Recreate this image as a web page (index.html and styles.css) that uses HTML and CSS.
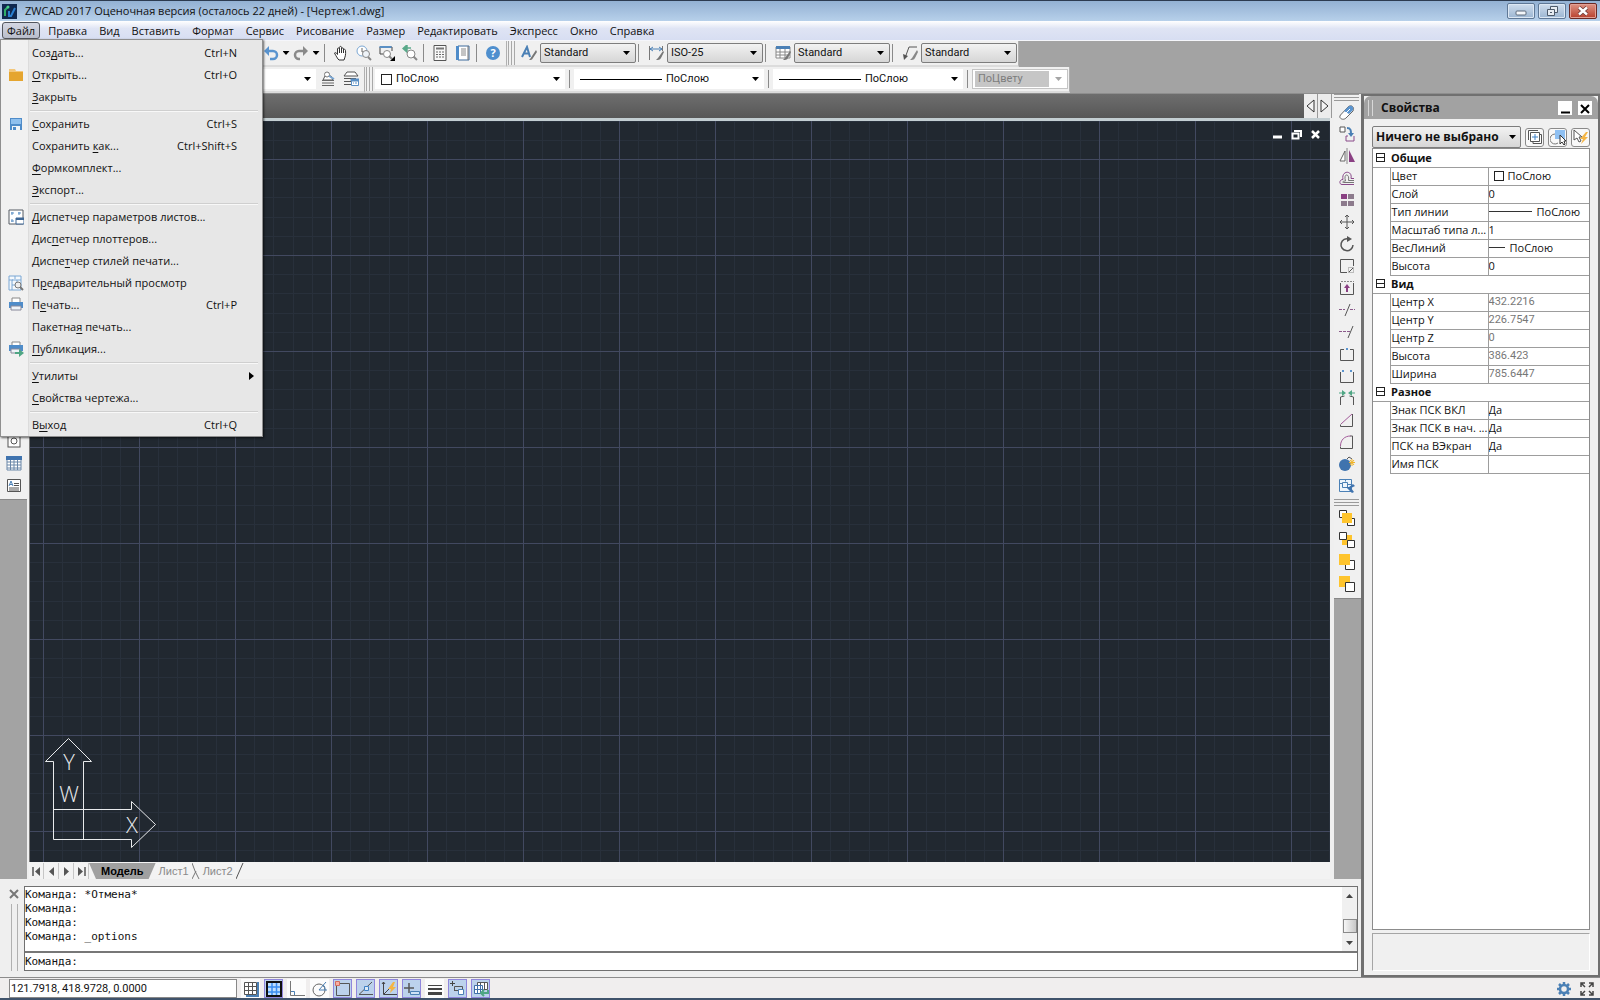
FILE: index.html
```html
<!DOCTYPE html>
<html lang="ru">
<head>
<meta charset="utf-8">
<title>ZWCAD 2017</title>
<link rel="stylesheet" href="styles.css">
</head>
<body>
<div class="app">
  <header class="titlebar">
    <svg class="logo" width="15" height="15" viewBox="0 0 15 15"><rect width="15" height="15" fill="#10284f"/><path d="M3 12V6l3-3" fill="none" stroke="#2fae6a" stroke-width="2"/><path d="M7 7v5l2 0 4-8" fill="none" stroke="#2a7fd0" stroke-width="2"/><circle cx="6" cy="3" r="1.500" fill="#49d08a"/></svg>
    <h1>ZWCAD 2017 Оценочная версия (осталось 22 дней) - [Чертеж1.dwg]</h1>
    <div class="window-buttons">
      <button aria-label="Свернуть"><svg width="12" height="12" viewBox="0 0 12 12"><rect x="1" y="6" width="10" height="4" rx="1" fill="#f4f7fa" stroke="#5d6b7c"/></svg></button>
      <button aria-label="Восстановить"><svg width="12" height="12" viewBox="0 0 12 12"><path d="M4.500 1.500h7v6h-7z" fill="#e6ecf2" stroke="#4d5a6a"/><path d="M1.500 4.500h7v6h-7z" fill="#e6ecf2" stroke="#4d5a6a"/><path d="M4 7h2v1H4z" fill="#4d5a6a"/></svg></button>
      <button class="close" aria-label="Закрыть"><svg width="12" height="12" viewBox="0 0 12 12"><path d="M2 2.500l8 7M10 2.500l-8 7" stroke="#6a3a38" stroke-width="4"/><path d="M2 2.500l8 7M10 2.500l-8 7" stroke="#fff" stroke-width="2.400"/></svg></button>
    </div>
  </header>

  <nav class="menubar">
    <div class="menu-root">
      <button class="menu-title open">Файл</button>
      <div class="menu">
        <button><span>Соз<u>д</u>ать...</span><kbd>Ctrl+N</kbd></button>
        <button><svg width="16" height="16" viewBox="0 0 16 16"><path d="M1 2h6l1 2h7v10H1z" fill="#f3c77b"/><path d="M1 5h14v9H1z" fill="#e5a52f"/></svg><span><u>О</u>ткрыть...</span><kbd>Ctrl+O</kbd></button>
        <button><span><u>З</u>акрыть</span></button>
        <hr>
        <button><svg width="16" height="16" viewBox="0 0 16 16"><path d="M2 2h12v12H2z" fill="#4f8cc9"/><path d="M3 3h10v5H3z" fill="#8fc0ee"/><path d="M4 10h8v4H4z" fill="#f2f5f8"/><path d="M5 11h3v3H5z" fill="#4f8cc9"/></svg><span><u>С</u>охранить</span><kbd>Ctrl+S</kbd></button>
        <button><span>Сохранить <u>к</u>ак...</span><kbd>Ctrl+Shift+S</kbd></button>
        <button><span><u>Ф</u>ормкомплект...</span></button>
        <button><span><u>Э</u>кспорт...</span></button>
        <hr>
        <button><svg width="16" height="16" viewBox="0 0 16 16"><path d="M1 1h14v14H1z" fill="#fff" stroke="#555b63"/><path d="M3 4h3M4 3v3M10 4h3M11 3v3M3 12h3M4 10v3" stroke="#5a8fc4"/><path d="M8 9h8v6H8z" fill="#fff" stroke="#3f6795"/><path d="M8 9h8v2H8z" fill="#3f6795"/></svg><span><u>Д</u>испетчер параметров листов...</span></button>
        <button><span>Дис<u>п</u>етчер плоттеров...</span></button>
        <button><span>Диспе<u>т</u>чер стилей печати...</span></button>
        <button><svg width="16" height="16" viewBox="0 0 16 16"><path d="M1 1h12v14H1zM1 5h4M7 1v3M9 5h4M4 5h5v5H4zM4 10v5" fill="#f5f9fd" stroke="#7aa7d4"/><circle cx="10" cy="10" r="3" fill="#eee" stroke="#777"/><path d="M12 12l3 3" stroke="#777" stroke-width="2"/></svg><span>П<u>р</u>едварительный просмотр</span></button>
        <button><svg width="16" height="16" viewBox="0 0 16 16"><path d="M4 1h8v5H4z" fill="#fff" stroke="#888"/><path d="M1 5h14v6H1z" fill="#4f8cc9"/><path d="M3 9h10v4H3z" fill="#eef3f8" stroke="#889"/></svg><span>П<u>е</u>чать...</span><kbd>Ctrl+P</kbd></button>
        <button><span>Пакетна<u>я</u> печать...</span></button>
        <button><svg width="16" height="16" viewBox="0 0 16 16"><path d="M4 1h8v4H4z" fill="#fff" stroke="#888"/><path d="M1 4h14v6H1z" fill="#4f8cc9"/><path d="M3 8h9v4H3z" fill="#eef3f8" stroke="#889"/><path d="M7 11h4V8l5 4-5 4v-3H7z" fill="#4fa684"/></svg><span><u>П</u>убликация...</span></button>
        <hr>
        <button class="has-sub"><span><u>У</u>тилиты</span></button>
        <button><span><u>С</u>войства чертежа...</span></button>
        <hr>
        <button><span>В<u>ы</u>ход</span><kbd>Ctrl+Q</kbd></button>
      </div>
    </div>
    <button class="menu-title">Правка</button>
    <button class="menu-title">Вид</button>
    <button class="menu-title">Вставить</button>
    <button class="menu-title">Формат</button>
    <button class="menu-title">Сервис</button>
    <button class="menu-title">Рисование</button>
    <button class="menu-title">Размер</button>
    <button class="menu-title">Редактировать</button>
    <button class="menu-title">Экспресс</button>
    <button class="menu-title">Окно</button>
    <button class="menu-title">Справка</button>
  </nav>

  <div class="toolbars">
    <div class="toolrow">
      <div class="toolbar first">
        <button class="tool narrow" aria-label="Отменить"><svg width="16" height="16" viewBox="0 0 16 16"><path d="M3 6h7a4 4 0 010 8H7" fill="none" stroke="#5a94cf" stroke-width="2.500"/><path d="M6 1v10L1 6z" fill="#5a94cf"/></svg></button>
        <button class="drop" aria-label="Список отмены"></button>
        <button class="tool narrow" aria-label="Повторить"><svg width="16" height="16" viewBox="0 0 16 16"><path d="M12 6H6a4 4 0 000 8h1" fill="none" stroke="#8a8a8a" stroke-width="2.500"/><path d="M10 1v10l5-5z" fill="#8a8a8a"/></svg></button>
        <button class="drop" aria-label="Список повтора"></button>
        <i class="sep"></i>
        <button class="tool" aria-label="Панорама"><svg width="16" height="16" viewBox="0 0 16 16"><path d="M5 14C3 11 2 9 1.500 8c1-1 2 0 3 1.500V4c0-1.500 2-1.500 2 0V2.500c0-1.500 2-1.500 2 0V4c0-1.500 2-1.500 2 0v1c0-1 2-1 2 .5C13 10 12 12 11 15H6z" fill="#fff" stroke="#333"/><path d="M6.500 4v4M8.500 3v5M10.500 4v4" stroke="#333"/></svg></button>
        <button class="tool" aria-label="Зуммирование"><svg width="16" height="16" viewBox="0 0 16 16"><circle cx="6" cy="6" r="5" fill="#fff" stroke="#7aa7d4"/><path d="M6 3v4h3" fill="none" stroke="#666"/><circle cx="10" cy="9" r="3.500" fill="#eef3f8" stroke="#888"/><path d="M12 12l3 3" stroke="#888" stroke-width="2"/></svg></button>
        <button class="tool" aria-label="Рамка"><svg width="18" height="16" viewBox="0 0 18 16"><path d="M5 9H2V2h12v4" fill="none" stroke="#444"/><path d="M1.500 2h12" stroke="#5a8fc4" stroke-width="2"/><circle cx="9" cy="9" r="3.500" fill="#fff" stroke="#888"/><path d="M11 11l3 3" stroke="#888" stroke-width="2"/><path d="M17 11v5h-5z" fill="#000"/></svg></button>
        <button class="tool" aria-label="Предыдущий вид"><svg width="16" height="16" viewBox="0 0 16 16"><path d="M5 0v7L1 3.500zM5 3h4" fill="#5aa98a" stroke="#5aa98a" stroke-width="1.500"/><circle cx="9" cy="9" r="4" fill="#fff" stroke="#888"/><path d="M11.500 11.500L15 15" stroke="#888" stroke-width="2"/></svg></button>
        <i class="sep"></i>
        <button class="tool" aria-label="Калькулятор"><svg width="16" height="16" viewBox="0 0 16 16"><path d="M2 .5h12v15H2z" fill="#f8f8f8" stroke="#555"/><path d="M4 3.500h8" stroke="#777" stroke-width="2"/><path d="M4 7h8M4 9.500h8M4 12h8" stroke="#666" stroke-dasharray="2 1"/></svg></button>
        <button class="tool" aria-label="Свойства"><svg width="16" height="16" viewBox="0 0 16 16"><path d="M3 1h11v14H3z" fill="#fff" stroke="#3c6a9c"/><path d="M2.500 1v14" stroke="#4f8cc9" stroke-width="3"/><path d="M6 4h5M6 6h5M6 8h5M6 10h5" stroke="#888"/><path d="M13 1v14" stroke="#777"/></svg></button>
        <i class="sep"></i>
        <button class="tool" aria-label="Справка"><svg width="16" height="16" viewBox="0 0 16 16"><circle cx="8" cy="8" r="7" fill="#4f8fce"/><text x="8" y="12" text-anchor="middle" class="help-mark">?</text></svg></button>
      </div>
      <div class="toolbar styles">
        <i class="grip"></i>
        <button class="tool" aria-label="Стиль текста"><svg width="16" height="16" viewBox="0 0 16 16"><path d="M1 12L6 2l3 10M3 8.500h5" fill="none" stroke="#4b80b5" stroke-width="2"/><path d="M15 5l-6 9-1 1c2 0 3 0 4-2l4-6z" fill="#777"/></svg></button>
        <span class="combo button"><select aria-label="Стиль текста"><option>Standard</option></select></span><i class="sep"></i>
        <button class="tool" aria-label="Размерный стиль"><svg width="16" height="16" viewBox="0 0 16 16"><path d="M1.500 1v14M14.500 1v5" stroke="#777"/><path d="M2 4h12M5 2L2 4l3 2M11 2l3 2-3 2" fill="none" stroke="#4b80b5"/><path d="M15 6l-5 7-2 2c2 0 4 0 5-2l3-6z" fill="#777"/></svg></button>
        <span class="combo button"><select aria-label="Размерный стиль"><option>ISO-25</option></select></span><i class="sep"></i>
        <button class="tool" aria-label="Стиль таблицы"><svg width="16" height="16" viewBox="0 0 16 16"><path d="M1 2h14v11H1zM1 7h14M1 10h14M5 4v9M10 4v9" fill="#fff" stroke="#888"/><path d="M1 1h14v3H1z" fill="#4b80b5"/><path d="M15 6l-5 7-2 2c2 0 4 0 5-2l3-6z" fill="#777"/></svg></button>
        <span class="combo button"><select aria-label="Стиль таблицы"><option>Standard</option></select></span><i class="sep"></i>
        <button class="tool" aria-label="Стиль выноски"><svg width="16" height="16" viewBox="0 0 16 16"><path d="M15 2H7L3 13" fill="none" stroke="#555"/><path d="M1 9l1 6 4-4z" fill="#555"/><path d="M15 5l-5 8-2 2c2 0 4 0 5-2l3-6z" fill="#888"/></svg></button>
        <span class="combo button"><select aria-label="Стиль выноски"><option>Standard</option></select></span>
      </div>
    </div>
    <div class="toolrow">
      <div class="toolbar layers">
        <span class="combo layer"><select aria-label="Слой"><option></option></select></span>
        <button class="tool" aria-label="Сделать слой текущим"><svg width="16" height="16" viewBox="0 0 16 16"><path d="M3 9l2-4h6l2 4z" fill="#fff" stroke="#555"/><path d="M2 9.500h12M2 12h12M2 14.500h12" stroke="#666"/><circle cx="7" cy="3.500" r="2.500" fill="#fff" stroke="#777"/><path d="M9 5l5 3" stroke="#7aa7d4" stroke-width="2"/></svg></button>
        <button class="tool" aria-label="Диспетчер слоев"><svg width="16" height="16" viewBox="0 0 16 16"><path d="M1 5l3-4h8l3 4z" fill="#fff" stroke="#555"/><path d="M1 7.500h12M1 10.500h7M1 13.500h7" stroke="#555"/><path d="M8.500 8.500h7v6h-7z" fill="#fff" stroke="#5a8fc4"/><path d="M8 8h8v2H8zM10 12h1M12 12h2" fill="#5a8fc4" stroke="#5a8fc4"/></svg></button>
      </div>
      <div class="toolbar props">
        <i class="grip"></i>
        <span class="combo wide"><i class="swatch"></i><select aria-label="Цвет"><option>ПоСлою</option></select></span><i class="sep"></i>
        <span class="combo wide"><i class="sample"></i><select aria-label="Тип линии"><option>ПоСлою</option></select></span><i class="sep"></i>
        <span class="combo wide"><i class="sample"></i><select aria-label="Вес линий"><option>ПоСлою</option></select></span><i class="sep"></i>
        <span class="combo disabled"><select aria-label="Стиль печати" disabled><option>ПоЦвету</option></select></span>
      </div>
    </div>
  </div>

  <main class="main">
    <div class="center">
      <div class="work">
        <aside class="rail left">
          <div class="rail-tools">
            <button class="tool" aria-label="Точка"><svg width="16" height="16" viewBox="0 0 16 16"><rect x="2" y="2" width="12" height="12" fill="#fff" stroke="#555"/><circle cx="8" cy="8" r="3" fill="none" stroke="#555"/></svg></button>
            <button class="tool" aria-label="Таблица"><svg width="16" height="16" viewBox="0 0 16 16"><path d="M1 2h14v13H1zM1 7h14M1 10h14M1 13h14M4.500 4v11M8 4v11M11.500 4v11" fill="#fff" stroke="#6b87a8"/><path d="M0 1h16v4H0z" fill="#3f73ae"/></svg></button>
            <button class="tool" aria-label="Текст"><svg width="16" height="16" viewBox="0 0 16 16"><path d="M1.500 2.500h13v12h-13z" fill="#fff" stroke="#555"/><path d="M3 9l2-5 2 5M4 7.500h2" fill="none" stroke="#4b80b5"/><path d="M8 6.500h5M8 8.500h5M3 11h10M3 13h10" stroke="#555"/></svg></button>
          </div>
        </aside>

        <section class="document">
          <div class="doc-tabs">
            <button aria-label="Предыдущий чертеж"><svg width="9" height="14" viewBox="0 0 9 14"><path d="M8 1v12L1 7z" fill="#f4f4f4" stroke="#333"/></svg></button>
            <button aria-label="Следующий чертеж"><svg width="9" height="14" viewBox="0 0 9 14"><path d="M1 1v12l7-6z" fill="#f4f4f4" stroke="#333"/></svg></button>
          </div>
          <div class="canvas">
            <svg class="grid" width="100%" height="100%">
              <defs><pattern id="grid" x="13" y="38" width="96" height="96" patternUnits="userSpaceOnUse">
                <path d="M19.500 0v96M38.500 0v96M58.500 0v96M77.500 0v96M0 19.500h96M0 38.500h96M0 58.500h96M0 77.500h96" stroke="#28303b"/>
                <path d="M.5 0v96M0 .5h96" stroke="#424960"/>
              </pattern></defs>
              <rect width="100%" height="100%" fill="url(#grid)"/>
            </svg>
            <div class="doc-buttons">
              <button aria-label="Свернуть чертеж"><svg width="11" height="11" viewBox="0 0 11 11"><path d="M1 8h9" stroke="#fff" stroke-width="3"/></svg></button>
              <button aria-label="Восстановить чертеж"><svg width="11" height="11" viewBox="0 0 11 11"><path d="M3 2h7v6" fill="none" stroke="#fff" stroke-width="2"/><path d="M1.500 4.500h6v5h-6z" fill="none" stroke="#fff" stroke-width="2"/></svg></button>
              <button aria-label="Закрыть чертеж"><svg width="11" height="11" viewBox="0 0 11 11"><path d="M2 2l7 7M9 2L2 9" stroke="#fff" stroke-width="2.500"/></svg></button>
            </div>
            <svg class="ucs" width="112" height="112" viewBox="0 0 112 112">
              <path d="M8.500 24.500H.5L23.500 1.500 46.500 24.500H38.500V102.500M8.500 24.500V102.500H86.500V110.500L110.500 87.500 86.500 64.500V72.500H8.500" fill="none" stroke="#e8eaec"/>
              <text x="24" y="33" text-anchor="middle">Y</text>
              <text x="24" y="65" text-anchor="middle">W</text>
              <text x="87" y="96" text-anchor="middle">X</text>
            </svg>
          </div>
          <div class="sheet-tabs">
            <button class="nav" aria-label="Первый лист"><svg width="9" height="9" viewBox="0 0 9 9"><path d="M1 0v9" stroke="#555" stroke-width="1.500"/><path d="M8 0v9L3 4.500z" fill="#555"/></svg></button>
            <button class="nav" aria-label="Предыдущий лист"><svg width="9" height="9" viewBox="0 0 9 9"><path d="M7 0v9L2 4.500z" fill="#555"/></svg></button>
            <button class="nav" aria-label="Следующий лист"><svg width="9" height="9" viewBox="0 0 9 9"><path d="M2 0v9l5-4.500z" fill="#555"/></svg></button>
            <button class="nav" aria-label="Последний лист"><svg width="9" height="9" viewBox="0 0 9 9"><path d="M8 0v9" stroke="#555" stroke-width="1.500"/><path d="M1 0v9l5-4.500z" fill="#555"/></svg></button>
            <button class="sheet active">Модель</button>
            <button class="sheet">Лист1</button>
            <svg width="8" height="16" viewBox="0 0 8 16"><path d="M0 0l3 8 4 8M4 8L0 16" fill="none" stroke="#777"/></svg>
            <button class="sheet">Лист2</button>
            <svg width="8" height="16" viewBox="0 0 8 16"><path d="M7 0L0 16" stroke="#555"/></svg>
          </div>
        </section>

        <aside class="rail right">
          <div class="rail-tools">
            <i class="hgrip"></i>
            <button class="tool" aria-label="Стереть"><svg width="16" height="16" viewBox="0 0 16 16"><path d="M1.500 11L9 3c3-3 7 0 5 4l-7 7c-3 3-8 0-5.500-3z" fill="#fff" stroke="#666"/><path d="M5 7l4-4c3-3 6 0 5 3l-4 4z" fill="#5a94cf"/><path d="M6 10l5-5" stroke="#fff"/></svg></button>
            <button class="tool" aria-label="Копировать"><svg width="16" height="16" viewBox="0 0 16 16"><path d="M1 1h5v5H1z" fill="#fff" stroke="#555"/><path d="M8 2c4 0 4 3 4 6" fill="none" stroke="#4b80b5" stroke-width="2"/><path d="M9 7h6l-3 4z" fill="#4b80b5"/><path d="M9 10H7v5h8v-5" fill="none" stroke="#8a4a8a"/></svg></button>
            <button class="tool" aria-label="Зеркало"><svg width="16" height="16" viewBox="0 0 16 16"><path d="M6 3v10H1z" fill="#fff" stroke="#666"/><path d="M10 2v12h6z" fill="#8a4083"/><path d="M8 0v16" stroke="#888"/></svg></button>
            <button class="tool" aria-label="Подобие"><svg width="16" height="16" viewBox="0 0 16 16"><path d="M15 14.500H3c-3 0-3-5 1-5C2 0 14 0 12 8.500h3" fill="none" stroke="#8a4a8a"/><path d="M15 12.500H4.500c-1.500 0-1-1.500 2-1.500C4 3 11 3 9.500 10.500H15" fill="none" stroke="#777"/></svg></button>
            <button class="tool" aria-label="Массив"><svg width="16" height="16" viewBox="0 0 16 16"><path d="M2 2h6v5H2z" fill="#8a4083"/><path d="M9 2h6v5H9zM2 9h6v5H2zM9 9h6v5H9z" fill="#8d7b8d"/></svg></button>
            <button class="tool" aria-label="Переместить"><svg width="16" height="16" viewBox="0 0 16 16"><path d="M8 1v14M1 8h14M6 3l2-2 2 2M6 13l2 2 2-2M3 6L1 8l2 2M13 6l2 2-2 2" fill="none" stroke="#555"/></svg></button>
            <button class="tool" aria-label="Повернуть"><svg width="16" height="16" viewBox="0 0 16 16"><path d="M10 3a6 6 0 104 6" fill="none" stroke="#555" stroke-width="1.500"/><path d="M8 0l5 3-5 3z" fill="#555"/></svg></button>
            <button class="tool" aria-label="Масштаб"><svg width="16" height="16" viewBox="0 0 16 16"><path d="M8 14.500H1.500v-13h13V8" fill="none" stroke="#555"/><path d="M9.500 9.500h5v5h-5z" fill="none" stroke="#888" stroke-dasharray="1 1"/><path d="M10 14l4-4" stroke="#555"/></svg></button>
            <button class="tool" aria-label="Растянуть"><svg width="16" height="16" viewBox="0 0 16 16"><path d="M1.500 3v11.500h13V3" fill="none" stroke="#555"/><path d="M2 1.500h13" stroke="#888" stroke-dasharray="2 1"/><path d="M8 12V7" stroke="#8a4083" stroke-width="2"/><path d="M5 8l3-4 3 4z" fill="#8a4083"/></svg></button>
            <button class="tool" aria-label="Обрезать"><svg width="16" height="16" viewBox="0 0 16 16"><path d="M6 14l5-12" stroke="#555"/><path d="M0 7.500h6M11 7.500h5" stroke="#8a5a8a" stroke-dasharray="3 1"/></svg></button>
            <button class="tool" aria-label="Удлинить"><svg width="16" height="16" viewBox="0 0 16 16"><path d="M9 14l5-12" stroke="#555"/><path d="M0 7.500h11" stroke="#8a5a8a" stroke-dasharray="3 1"/></svg></button>
            <button class="tool" aria-label="Разорвать в точке"><svg width="16" height="16" viewBox="0 0 16 16"><path d="M5 3.500H1.500v11h13v-11H11" fill="none" stroke="#555"/><path d="M7 2h2v2H7z" fill="#5a94cf"/></svg></button>
            <button class="tool" aria-label="Разорвать"><svg width="16" height="16" viewBox="0 0 16 16"><path d="M1.500 4v10.500h13V4" fill="none" stroke="#555"/><path d="M3 2h2v2H3zM11 2h2v2h-2z" fill="#5a94cf"/></svg></button>
            <button class="tool" aria-label="Соединить"><svg width="16" height="16" viewBox="0 0 16 16"><path d="M1.500 15V7l4-1M14.500 15V7l-4-1" fill="none" stroke="#555"/><path d="M0 3h4M12 3h4" stroke="#4fa684"/><path d="M3 0l4 3-4 3zM13 0L9 3l4 3z" fill="#4fa684"/></svg></button>
            <button class="tool" aria-label="Фаска"><svg width="16" height="16" viewBox="0 0 16 16"><path d="M13.500 2v12.500H1.500v-2" fill="none" stroke="#555"/><path d="M2 12L13 2" stroke="#a25a9a"/></svg></button>
            <button class="tool" aria-label="Сопряжение"><svg width="16" height="16" viewBox="0 0 16 16"><path d="M11 2h2.500v12.500H1.500v-2" fill="none" stroke="#555"/><path d="M1.500 12c0-6 4-10 10-10" fill="none" stroke="#a25a9a"/></svg></button>
            <button class="tool" aria-label="Расчленить"><svg width="16" height="16" viewBox="0 0 16 16"><circle cx="6" cy="9" r="6" fill="#3f73ae"/><path d="M8 3l2-2 3 2" fill="none" stroke="#555"/><path d="M13 3v7M10 6.500h6M11 4l4 5M15 4l-4 5" stroke="#f0b429"/></svg></button>
            <button class="tool" aria-label="Редактор блоков"><svg width="16" height="16" viewBox="0 0 16 16"><path d="M.5 1.500h12v12H.5zM.5 5.500h3M6.500 1.500v2M3.500 4.500h5v5h-5zM9 6.500h3" fill="#eef5fc" stroke="#4b80b5"/><path d="M7 9l3 0 4-3 2 2-4 2 3 4-2 1z" fill="#3f73ae"/></svg></button>
            <i class="hgrip inner"></i>
            <button class="tool" aria-label="На передний план"><svg width="16" height="16" viewBox="0 0 16 16"><path d="M.5.500h7v7h-7zM8.500 8.500h7v7h-7z" fill="#fff" stroke="#333"/><path d="M3 3h10v10H3z" fill="#fec42d"/></svg></button>
            <button class="tool" aria-label="На задний план"><svg width="16" height="16" viewBox="0 0 16 16"><path d="M3 3h10v10H3z" fill="#fec42d"/><path d="M.5.500h7v7h-7zM8.500 8.500h7v7h-7z" fill="#fff" stroke="#333"/></svg></button>
            <button class="tool" aria-label="Поверх объекта"><svg width="16" height="16" viewBox="0 0 16 16"><path d="M6.500 6.500h9v9h-9z" fill="#fff" stroke="#333"/><path d="M0 0h11v11H0z" fill="#fec42d"/></svg></button>
            <button class="tool" aria-label="Под объектом"><svg width="16" height="16" viewBox="0 0 16 16"><path d="M0 0h11v11H0z" fill="#fec42d"/><path d="M6.500 6.500h9v9h-9z" fill="#fff" stroke="#333"/></svg></button>
          </div>
        </aside>
      </div>

      <section class="command">
        <div class="command-side">
          <button aria-label="Закрыть командную строку"><svg width="10" height="10" viewBox="0 0 10 10"><path d="M1 1l8 8M9 1L1 9" stroke="#777" stroke-width="2"/></svg></button>
          <i class="vgrip"></i>
        </div>
        <div class="command-box">
          <div class="history">
            <pre>Команда: *Отмена*
Команда:
Команда:
Команда: _options</pre>
            <div class="scrollbar"><i class="up"></i><i class="thumb"></i><i class="down"></i></div>
          </div>
          <label class="prompt">Команда:<input type="text" aria-label="Командная строка"></label>
        </div>
      </section>
    </div>

    <aside class="palette">
      <header><i class="palette-grip"></i><h2>Свойства</h2>
        <button aria-label="Свернуть панель"><svg width="14" height="14" viewBox="0 0 14 14"><path d="M3 11.500h9" stroke="#000" stroke-width="2"/></svg></button>
        <button aria-label="Закрыть панель"><svg width="14" height="14" viewBox="0 0 14 14"><path d="M3 4l8 8M11 4l-8 8" stroke="#000" stroke-width="2"/></svg></button>
      </header>
      <div class="selection">
        <span class="combo button big"><select aria-label="Выбор"><option>Ничего не выбрано</option></select></span>
        <button aria-label="Добавление к набору"><svg width="16" height="16" viewBox="0 0 16 16"><path d="M1.500 11V1.500H11M3.500 3.500h9v9h-9zM13 5.500h1.500v9H6V13" fill="#fff" stroke="#555"/><path d="M8 5v6M5 8h6" stroke="#3f80c4"/></svg></button>
        <button aria-label="Выбрать объекты"><svg width="16" height="16" viewBox="0 0 16 16"><path d="M5 1h10v9H5z" fill="#8fc0f2"/><path d="M5 5a5 5 0 103 9" fill="none" stroke="#777"/><path d="M10 6v9l2-2 2 3 1-1-1-3h2z" fill="#fff" stroke="#333"/></svg></button>
        <button aria-label="Быстрый выбор"><svg width="16" height="16" viewBox="0 0 16 16"><path d="M1 1v10l3-2 2 4 2-1-2-4h3z" fill="#fff" stroke="#555"/><path d="M13 3l-6 7h3l-2 5 7-7h-3l3-5z" fill="#f5b544"/></svg></button>
      </div>
      <div class="sheetbox">
        <table>
          <colgroup><col class="c-mark"><col class="c-name"><col></colgroup>
          <tbody>
            <tr class="group"><td><i class="collapse"></i></td><th colspan="2">Общие</th></tr>
            <tr><td></td><th>Цвет</th><td><i class="swatch"></i>ПоСлою</td></tr>
            <tr><td></td><th>Слой</th><td>0</td></tr>
            <tr><td></td><th>Тип линии</th><td><i class="rule long"></i>ПоСлою</td></tr>
            <tr><td></td><th>Масштаб типа л...</th><td>1</td></tr>
            <tr><td></td><th>ВесЛиний</th><td><i class="rule"></i>ПоСлою</td></tr>
            <tr><td></td><th>Высота</th><td>0</td></tr>
          </tbody>
          <tbody class="readonly">
            <tr class="group"><td><i class="collapse"></i></td><th colspan="2">Вид</th></tr>
            <tr><td></td><th>Центр X</th><td>432.2216</td></tr>
            <tr><td></td><th>Центр Y</th><td>226.7547</td></tr>
            <tr><td></td><th>Центр Z</th><td>0</td></tr>
            <tr><td></td><th>Высота</th><td>386.423</td></tr>
            <tr><td></td><th>Ширина</th><td>785.6447</td></tr>
          </tbody>
          <tbody>
            <tr class="group"><td><i class="collapse"></i></td><th colspan="2">Разное</th></tr>
            <tr><td></td><th>Знак ПСК ВКЛ</th><td>Да</td></tr>
            <tr><td></td><th>Знак ПСК в нач. ...</th><td>Да</td></tr>
            <tr><td></td><th>ПСК на ВЭкран</th><td>Да</td></tr>
            <tr><td></td><th>Имя ПСК</th><td></td></tr>
          </tbody>
        </table>
      </div>
      <div class="hint"></div>
    </aside>
  </main>

  <footer class="statusbar">
    <input class="coords" type="text" aria-label="Координаты" value="121.7918, 418.9728, 0.0000" readonly>
    <button aria-label="Шаг"><svg width="16" height="16" viewBox="0 0 16 16"><path d="M1.500 1.500h12v12h-12zM1.500 5.500h12M1.500 9.500h12M5.500 1.500v12M9.500 1.500v12" fill="#fff" stroke="#555"/><path d="M15 1v14H3" fill="none" stroke="#4b80b5" stroke-width="2"/></svg></button>
    <button class="on" aria-label="Сетка"><svg width="16" height="16" viewBox="0 0 16 16"><path d="M1 1h14v14H1z" fill="#bfe0ff" stroke="#111" stroke-width="2"/><path d="M2 6h12M2 11h12M6 2v12M10.500 2v12" stroke="#3b8df0" stroke-width="1.500"/></svg></button>
    <button aria-label="Орто"><svg width="16" height="16" viewBox="0 0 16 16"><path d="M1.500 0v14.500H16" fill="none" stroke="#777"/><path d="M2 10.500h3.500V14" fill="none" stroke="#4b80b5"/></svg></button>
    <button aria-label="Полярное отслеживание"><svg width="16" height="16" viewBox="0 0 16 16"><circle cx="7" cy="9" r="6" fill="none" stroke="#666"/><path d="M7 9h8M7 9l7-8M11 4c2 1 2 3 2 5" fill="none" stroke="#4b80b5"/></svg></button>
    <button class="on" aria-label="Привязка"><svg width="16" height="16" viewBox="0 0 16 16"><path d="M1.500 2.500h13v12h-13z" fill="none" stroke="#555"/><path d="M.5.500h4v4h-4z" fill="#f6b0a4" stroke="#d56b5c"/></svg></button>
    <button class="on" aria-label="Отслеживание привязки"><svg width="16" height="16" viewBox="0 0 16 16"><path d="M15 13.500H1L14 1" fill="none" stroke="#555"/><path d="M6.500 5.500h4v4h-4z" fill="#dceaf8" stroke="#3f80c4"/></svg></button>
    <button class="on" aria-label="Динамическая ПСК"><svg width="16" height="16" viewBox="0 0 16 16"><path d="M2.500 1v12.500H16M1 3l1.500-2L4 3M3 13l8-8" fill="none" stroke="#444"/><path d="M12 1L7 8h3l-1 4 6-6h-3l2-5z" fill="#f5b544"/></svg></button>
    <button class="on" aria-label="Динамический ввод"><svg width="16" height="16" viewBox="0 0 16 16"><path d="M5 2v10M0 7h10" stroke="#555" stroke-width="1.500"/><path d="M6.500 10.500h9v3h-9z" fill="#cfe2f5" stroke="#4b80b5"/></svg></button>
    <button aria-label="Вес линий"><svg width="16" height="16" viewBox="0 0 16 16"><path d="M1 4.500h14" stroke="#444"/><path d="M1 8h14" stroke="#444" stroke-width="2"/><path d="M1 12.500h14" stroke="#444" stroke-width="3"/></svg></button>
    <button class="on" aria-label="Циклический выбор"><svg width="16" height="16" viewBox="0 0 16 16"><path d="M0 2.500h5M2.500 0v5" stroke="#444"/><path d="M4.500 10V5.500h8V8M4 9.500h4" fill="none" stroke="#555"/><path d="M8.500 8.500h5v5h-5z" fill="#fff" stroke="#4b80b5"/></svg></button>
    <button class="on" aria-label="Быстрые свойства"><svg width="16" height="16" viewBox="0 0 16 16"><path d="M4.500 4.500v-3h10v7h-4M7.500 1v3M11.500 1v7" fill="#fff" stroke="#555"/><path d="M1.500 4.500h8v8h-8zM1 8.500h9M4.500 4v9M7.500 4v9" fill="#fff" stroke="#3f6fa8"/><path d="M15 9v3H9M11 9l-3 3 3 3" fill="none" stroke="#4fa684" stroke-width="2"/></svg></button>
    <span class="spacer"></span>
    <button class="plain" aria-label="Настройки"><svg width="14" height="14" viewBox="0 0 14 14"><circle cx="7" cy="7" r="4" fill="none" stroke="#4b80b5" stroke-width="2.500"/><path d="M7 0v3M7 11v3M0 7h3M11 7h3M2 2l2 2M10 10l2 2M12 2l-2 2M4 10l-2 2" stroke="#4b80b5" stroke-width="2.500"/></svg></button>
    <button class="plain" aria-label="Во весь экран"><svg width="14" height="14" viewBox="0 0 14 14"><path d="M1 5V1h4M9 1h4v4M13 9v4H9M5 13H1V9M1 1l4 4M13 1L9 5M13 13L9 9M1 13l4-4" fill="none" stroke="#444" stroke-width="1.500"/></svg></button>
  </footer>
</div>
</body>
</html>
```
FILE: styles.css
```css
* { box-sizing: border-box; }
body { margin: 0; font: 11px/16px "Open Sans", "Noto Sans", sans-serif; color: #111; }
button, select, input { font: inherit; color: inherit; margin: 0; padding: 0; border: 0; background: none; border-radius: 0; outline: 0; }
button { display: flex; align-items: center; justify-content: center; }
svg { display: block; flex: none; }
i { display: block; flex: none; }
h1, h2 { margin: 0; font-size: 11px; }

.app { display: flex; flex-direction: column; min-height: 100vh; background: #efefef; }

/* window title */
.titlebar { display: flex; align-items: center; height: 21px; padding: 0 2px; gap: 8px; border-top: 1px solid #2c3b50; background: linear-gradient(#93b1d3, #b7d0ea); }
.titlebar h1 { flex: 1; font-weight: 400; white-space: nowrap; }
.window-buttons { display: flex; gap: 3px; padding-right: 1px; }
.window-buttons button { width: 28px; height: 16px; border: 1px solid #5f7896; border-radius: 2px; background: linear-gradient(#cfdded, #9cb6d2); box-shadow: inset 0 0 0 1px #dde8f4; }
.window-buttons .close { border-color: #6b2a24; background: linear-gradient(#dd9384, #b8412e); box-shadow: inset 0 0 0 1px #e2a196; }

/* menu bar */
.menubar { display: flex; align-items: flex-end; height: 20px; padding: 0 2px 1px; background: linear-gradient(#fff, #dfe4f4 40%, #d7def2); border-bottom: 1px solid #f5f6fb; }
.menu-root { position: relative; margin-right: 2px; }
.menu-title { height: 17px; padding: 0 6px; white-space: nowrap; }
.menu-title.open { padding: 0 4px; border: 1px solid #53565e; border-radius: 3px; background: linear-gradient(#d4d7e2, #b9bdcc); }
.menu { position: absolute; z-index: 5; left: -2px; top: 17px; width: 263px; padding: 2px 4px 0 1px; border: 1px solid #8f8f8f; background: linear-gradient(90deg, #f1f1f1 27px, #dcdcdc 27px, #dcdcdc 28px, #e7e7e7 28px); box-shadow: 1px 1px 2px #0009; }
.menu button { width: 100%; height: 22px; padding: 0 21px 0 6px; justify-content: flex-start; text-align: left; gap: 8px; white-space: nowrap; }
.menu button > span:first-child { margin-left: 24px; }
.menu span { flex: 1; }
.menu u { text-underline-offset: 2px; }
.menu kbd { font: inherit; }
.menu hr { height: 2px; margin: 2px 0 1px 28px; border: 0; border-top: 1px solid #cfcfcf; border-bottom: 1px solid #f8f8f8; }
.menu .has-sub::after { content: ""; width: 5px; height: 8px; margin-right: -17px; background: #000; clip-path: polygon(0 0, 100% 50%, 0 100%); }

/* toolbars */
.toolbars { background: #a3a3a3; font-family: Roboto, "Noto Sans", sans-serif; font-size: 11px; }
.toolrow { display: flex; }
.toolbar { display: flex; align-items: center; height: 26px; background: #f0f0f0; border-bottom: 2px solid #dcdcdc; border-right: 1px solid #b0b0b0; }
.toolbar.first { padding-left: 262px; padding-right: 2px; }
.toolbar.styles { padding-right: 1px; }
.toolbar.layers { padding-left: 262px; padding-right: 2px; }
.toolbar.props { padding-right: 1px; }
.tool { width: 23px; height: 22px; }
.tool.narrow { width: 18px; }
.drop { width: 12px; height: 22px; }
.drop::after, .combo::after { content: ""; width: 7px; height: 4px; background: #000; clip-path: polygon(0 0, 100% 0, 50% 100%); }
.sep { width: 1px; height: 18px; margin: 0 2px; background: #8a8a8a; }
.first .sep + .tool { margin-left: 2px; }
.styles .sep + .tool { margin-left: 3px; }
.grip { width: 7px; height: 24px; margin: 0 2px 0 1px; border: solid #a8a8a8; border-width: 0 1px; background: linear-gradient(90deg, transparent 2px, #a8a8a8 2px, #a8a8a8 3px, transparent 3px); }
.help-mark { font: 700 11px "Open Sans", sans-serif; fill: #fff; }
.combo { display: flex; align-items: center; height: 20px; padding: 0 5px 0 3px; background: #fff; }
.combo select { appearance: none; flex: 1; min-width: 0; }
.combo.button { width: 96px; border: 1px solid #7d7d7d; border-radius: 2px; background: linear-gradient(#f2f2f2, #d6d6d6); }
.combo.layer { width: 54px; }
.combo.wide { width: 190px; padding-left: 6px; }
.props .sep { margin: 0 4px; }
.swatch { width: 11px; height: 11px; margin-right: 4px; border: 1px solid #222; background: #fff; }
.sample { width: 82px; height: 1px; margin-right: 4px; background: #000; }
.combo.disabled { width: 96px; padding-left: 2px; border: 1px solid #c4c4c4; }
.combo.disabled select { margin-right: 6px; padding-left: 3px; background: #c6c6c6; color: #7d7d7d; opacity: 1; }
.combo.disabled::after { background: #a5a5a5; }

/* work area */
.main { flex: 1; display: flex; min-height: 0; border-top: 1px solid #8e8e8e; }
.center { flex: 1; display: flex; flex-direction: column; min-width: 0; }
.work { flex: 1; display: flex; min-height: 0; }
.rail { width: 27px; background: #a3a3a3; }
.rail-tools { display: flex; flex-direction: column; align-items: center; background: #f0f0f0; border-bottom: 1px solid #888; }
.left .rail-tools { padding-top: 336px; padding-bottom: 3px; }
.right .rail-tools { padding: 0 2px 3px 0; }
.hgrip { width: 25px; height: 7px; border: solid #9a9a9a; border-width: 1px 0; background: linear-gradient(transparent 2px, #9a9a9a 2px, #9a9a9a 3px, transparent 3px); }
.hgrip.inner { margin: 2px 0 1px; }
.document { flex: 1; min-width: 0; display: flex; flex-direction: column; padding: 0 4px 0 2px; }
.doc-tabs { display: flex; justify-content: flex-end; height: 24px; margin: 0 -2px; background: linear-gradient(#6e6e6e, #575757); }
.doc-tabs button { width: 14px; background: #ececec; border-right: 1px solid #999; }
.canvas { flex: 1; position: relative; overflow: hidden; background: #212830; border-top: 3px solid #c3ced2; border-left: 1px solid #777; }
.grid { position: absolute; inset: 0; }
.doc-buttons { position: absolute; top: 8px; right: 9px; display: flex; gap: 8px; }
.ucs { position: absolute; left: 15px; bottom: 13px; }
.ucs text { font: 300 22px "Open Sans", sans-serif; fill: #e8eaec; }
.sheet-tabs { display: flex; height: 17px; padding-top: 1px; font-family: "Liberation Sans", Arial, sans-serif; background: #f3f3f3; color: #8a8a8a; }
.nav { width: 15px; border-right: 1px solid #c6c6c6; }
.sheet { padding: 0 3px; }
.sheet.active { padding: 0 12px; font-weight: 700; color: #000; background: #a0a0a0; clip-path: polygon(0 0, 100% 0, calc(100% - 7px) 100%, 7px 100%); }

/* command line */
.command { display: flex; padding: 7px 3px 6px 0; }
.command-side { width: 24px; display: flex; flex-direction: column; align-items: center; gap: 5px; padding: 3px 0 0 4px; }
.vgrip { flex: 1; width: 7px; border: solid #b0b0b0; border-width: 0 1px; }
.command-box { flex: 1; border: 1px solid #707070; background: #fff; font: 11px/14px "DejaVu Sans Mono", monospace; }
.history { display: flex; justify-content: space-between; height: 66px; border-bottom: 2px solid #777; }
.history pre { margin: 1px 0 0; font: inherit; }
.scrollbar { width: 15px; display: flex; flex-direction: column; align-items: center; padding: 7px 0 6px; background: #f0f0f0; }
.up, .down { width: 7px; height: 4px; background: #444; clip-path: polygon(50% 0, 100% 100%, 0 100%); }
.down { clip-path: polygon(0 0, 100% 0, 50% 100%); }
.thumb { width: 14px; height: 14px; margin: auto 0 8px; border: 1px solid #8a8a8a; background: linear-gradient(90deg, #f6f6f6, #c8c8c8); }
.prompt { display: flex; height: 17px; align-items: center; }
.prompt input { flex: 1; height: 15px; }

/* properties palette */
.palette { width: 239px; display: flex; flex-direction: column; padding: 2px 1px 0; background: #f0f0f0; border: solid #707070; border-width: 2px 2px 2px 3px; }
.palette header { display: flex; align-items: center; gap: 6px; height: 23px; margin: -2px -1px 0; padding: 0 6px 0 4px; background: #a2a2a2; border-radius: 7px 7px 0 0; }
.palette h2 { flex: 1; margin-left: 2px; font-size: 12px; }
.palette header button { width: 14px; height: 14px; background: #fff; }
.palette-grip { width: 5px; height: 16px; border: solid #d8d8d8; border-width: 0 1px; }
.selection { display: flex; align-items: center; gap: 4px; padding: 7px 7px 0; }
.selection button { width: 19px; height: 19px; border: 1px solid #8a8a8a; border-radius: 3px; background: #f8f8f8; }
.combo.button.big { flex: 1; width: auto; height: 22px; font-family: "Open Sans", "Noto Sans", sans-serif; font-weight: 700; font-size: 12px; padding-right: 4px; }
.sheetbox { flex: 1; margin: 0 7px; border: 1px solid #8c8c8c; background: #fff; }
.sheetbox table { width: 100%; border-collapse: collapse; table-layout: fixed; }
.c-mark { width: 17px; }
.c-name { width: 98px; }
.sheetbox tr { height: 18px; }
.sheetbox th, .sheetbox td { height: 18px; padding: 0 0 0 1px; line-height: 16px; font-weight: 400; text-align: left; white-space: nowrap; border: 1px solid #9d9d9d; border-width: 0 0 1px 1px; overflow: hidden; }
.sheetbox td { padding-left: 0; }
.sheetbox td:first-child { border-left: 0; border-bottom: 0; }
.sheetbox .group td { padding-left: 3px; border-bottom: 1px solid #9d9d9d; }
.sheetbox .group th { font-weight: 700; border-left: 0; }
.sheetbox td .swatch { display: inline-block; margin: 0 4px 0 5px; vertical-align: -1px; width: 10px; height: 10px; }
.rule { display: inline-block; width: 16px; height: 1px; margin-right: 5px; background: #333; vertical-align: 4px; }
.rule.long { width: 43px; }
.readonly td { color: #777; font-family: Roboto, "Noto Sans", sans-serif; }
.collapse { width: 9px; height: 9px; border: 1px solid #222; background: linear-gradient(#fff 3px, #222 3px, #222 4px, #fff 4px); }
.hint { height: 38px; margin: 3px 7px 4px; border: 1px solid #a5a5a5; border-right-color: #fff; border-bottom-color: #fff; }

/* status bar */
.statusbar { display: flex; align-items: center; gap: 4px; height: 23px; padding: 1px 4px 0 9px; background: #f0eeee; border-top: 1px solid #8c8c8c; border-bottom: 2px solid #40536b; }
.coords { width: 228px; height: 19px; padding-left: 1px; border: 1px solid #888; background: #fff; font-family: Roboto, "Noto Sans", sans-serif; }
.statusbar button { width: 19px; height: 19px; background: #fcfcfc; }
.statusbar .on { border: 1px solid #8f86dc; background: #bcd2ec; }
.statusbar .plain { background: none; }
.spacer { flex: 1; }
```
